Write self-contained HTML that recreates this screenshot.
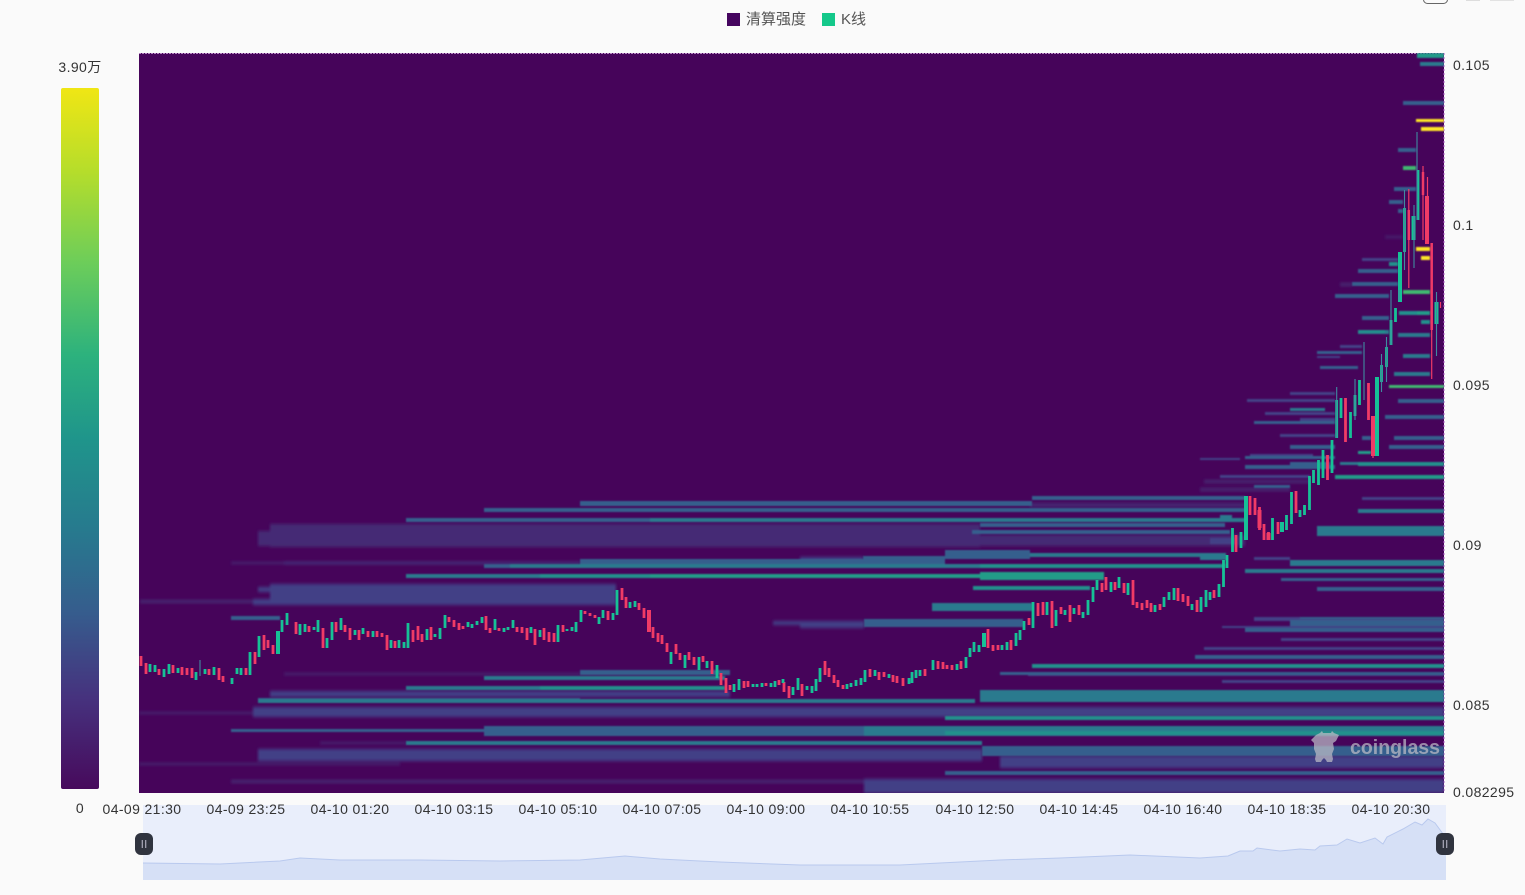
<!DOCTYPE html>
<html><head><meta charset="utf-8"><style>
html,body{margin:0;padding:0;background:#fafafa;width:1525px;height:895px;overflow:hidden}
svg{display:block;font-family:"Liberation Sans","Noto Sans CJK SC",sans-serif}
.c1{fill:#452a74}.c2{fill:#424086}.c3{fill:#365f8d}.c4{fill:#2b7a8e}.c5{fill:#24908c}.c6{fill:#229c88}.c7{fill:#3fb870}.y{fill:#fde725}
.t{font-size:14px;fill:#333;letter-spacing:.38px}
</style></head><body>
<svg width="1525" height="895" viewBox="0 0 1525 895" xmlns="http://www.w3.org/2000/svg">
<defs>
<linearGradient id="vb" x1="0" y1="0" x2="0" y2="1">
<stop offset="0" stop-color="#f0e614"/><stop offset=".12" stop-color="#b5dd2b"/><stop offset=".25" stop-color="#6ccd5a"/><stop offset=".38" stop-color="#2db27d"/><stop offset=".5" stop-color="#1f958b"/><stop offset=".63" stop-color="#277a8e"/><stop offset=".75" stop-color="#365c8d"/><stop offset=".87" stop-color="#46327e"/><stop offset="1" stop-color="#470a5c"/>
</linearGradient>
<filter id="bl" x="-1%" y="-1%" width="102%" height="102%"><feGaussianBlur stdDeviation="0.9 0.8"/></filter>
<filter id="bd" x="-1%" y="-2%" width="102%" height="104%"><feGaussianBlur stdDeviation="1.2 1.7"/></filter>
<filter id="cb" x="-1%" y="-1%" width="102%" height="102%"><feGaussianBlur stdDeviation="0.35"/></filter>
<clipPath id="pc"><rect x="139" y="53" width="1305" height="740"/></clipPath>
</defs>

<!-- top-right clipped control -->
<rect x="1423.5" y="-6" width="24" height="9.5" rx="4" fill="none" stroke="#666" stroke-width="1"/>
<rect x="1466" y="0" width="14" height="1" fill="#ddd"/><rect x="1490" y="0" width="24" height="1" fill="#e2e2e2"/>

<!-- legend -->
<rect x="727" y="13" width="13" height="13" fill="#45055f"/>
<text x="746" y="24" font-size="15" fill="#555">清算强度</text>
<rect x="822" y="13" width="13" height="13" fill="#14c88a"/>
<text x="841" y="24" font-size="15" fill="#555">K线</text>

<!-- colour bar -->
<rect x="61" y="88" width="38" height="701" rx="2" fill="url(#vb)"/>
<text x="80" y="72" text-anchor="middle" class="t">3.90万</text>
<text x="80" y="813" text-anchor="middle" class="t">0</text>

<!-- heatmap -->
<rect x="139" y="53" width="1305" height="740" fill="#46045a"/>
<line x1="139" y1="53.5" x2="1444" y2="53.5" stroke="#b98ac4" stroke-width="1" stroke-dasharray="2 1"/>
<line x1="1444" y1="53" x2="1444" y2="793" stroke="#b060c8" stroke-width="1" stroke-dasharray="2 2"/>
<g clip-path="url(#pc)"><g filter="url(#bd)">
<path class="c1" d="M270 524H980V547H270zM258 531H270V546H258zM980 535H1245V546H980zM1204 480H1310V483H1204zM1030 503H1245V507H1030zM140 600H253V603H140zM1200 488H1290V491H1200zM139 712H253V714H139zM139 763H400V765H139zM231 780H864V783H231zM284 673H580V675H284zM320 692H580V695H320zM320 742H406V744H320zM231 562H284V564H231zM1340 283H1352V286H1340zM1385 236H1403V238H1385z"/>
<path class="c2" d="M284 562H580V564H284zM253 599H616V605H253zM270 584H616V600H270zM258 587H270V592H258zM270 691H730V697H270zM253 707H1444V717H253zM258 749H982V761H258zM864 779H1444V793H864zM1000 756H1444V768H1000zM800 622H864V628H800zM773 621H864V625H773zM800 557H863V564H800z"/>
</g><g filter="url(#bl)">
<path class="c2" d="M1028 672H1444V676H1028zM1254 617H1444V621H1254zM1222 626H1444V628H1222zM1281 638H1444V641H1281zM1204 647H1444V650H1204zM1222 680H1444V683H1222zM1254 557H1290V560H1254zM1362 497H1444V500H1362zM1210 538H1236V544H1210zM1340 345H1362V348H1340zM1362 258H1398V261H1362zM1317 356H1340V358H1317zM1247 399H1335V402H1247zM1290 392H1335V395H1290zM1265 412H1335V415H1265zM1280 434H1335V437H1280zM1300 418H1335V421H1300zM1250 454H1313V457H1250zM1220 475H1310V478H1220zM1200 458H1240V460H1200z"/>
<path class="c3" d="M1032 496H1245V500H1032zM580 501H1032V506H580zM484 508H1245V512H484zM406 518H1245V522H406zM980 523H1225V527H980zM972 530H1230V534H972zM945 550H1030V559H945zM863 556H945V564H863zM580 559H863V564H580zM484 564H980V568H484zM864 619H1023V627H864zM580 670H730V675H580zM1300 617H1444V619H1300zM1290 620H1444V626H1290zM1245 628H1444V632H1245zM1195 655H1444V659H1195zM1281 578H1444V581H1281zM1317 587H1444V591H1317zM231 616H280V620H231zM258 698H580V702H258zM231 729H864V732H231zM484 726H1024V736H484zM406 741H980V745H406zM982 746H1444V756H982zM945 771H1444V775H945zM1000 672H1444V675H1000zM1403 101H1444V105H1403zM1398 148H1416V152H1398zM1394 187H1416V191H1394zM1389 200H1403V204H1389zM1398 209H1403V213H1398zM1358 269H1398V273H1358zM1335 294H1389V298H1335zM1352 282H1398V286H1352zM1362 316H1389V320H1362zM1358 330H1389V333H1358zM1317 351H1340V354H1317zM1340 351H1362V354H1340zM1320 366H1358V369H1320zM1398 399H1444V403H1398zM1385 415H1444V419H1385zM1394 436H1444V440H1394zM1362 436H1371V440H1362zM1389 445H1444V449H1389zM1245 456H1335V459H1245zM1245 465H1335V469H1245zM1290 445H1335V449H1290zM1254 485H1290V488H1254zM1254 421H1335V424H1254zM1290 462H1330V466H1290z"/>
<path class="c4" d="M650 518H1245V522H650zM510 564H980V568H510zM1030 553H1225V557H1030zM406 574H540V578H406zM932 603H1032V611H932zM484 676H725V680H484zM406 686H540V690H406zM258 699H975V703H258zM980 690H1444V702H980zM864 726H1444V736H864zM406 741H982V745H406zM1290 560H1444V566H1290zM1245 569H1444V573H1245zM1420 62H1444V66H1420zM1398 333H1430V337H1398zM1358 330H1389V334H1358zM1403 354H1430V358H1403zM1394 372H1430V376H1394zM1358 451H1371V454H1358zM1358 509H1444V513H1358zM1317 526H1444V536H1317zM1340 462H1358V465H1340zM1290 408H1325V411H1290zM1220 515H1232V522H1220zM1200 553H1226V560H1200z"/>
<path class="c5" d="M980 564H1225V568H980zM540 574H980V578H540zM540 686H725V690H540zM973 586H1090V590H973zM1032 664H1444V668H1032zM945 716H1444V720H945zM945 731H1444V735H945zM1358 462H1444V466H1358zM1335 475H1444V479H1335zM1417 53H1444V58H1417zM1389 262H1398V266H1389zM1399 311H1430V315H1399zM1358 330H1385V333H1358zM1421 320H1430V324H1421z"/>
<path class="c6" d="M650 574H1104V578H650zM980 572H1104V580H980zM1417 311H1430V315H1417zM1335 475H1444V479H1335zM1417 54H1444V57H1417zM1358 451H1371V454H1358z"/>
<path class="c7" d="M1403 166H1416V170H1403zM1403 290H1430V294H1403zM1389 385H1444V388H1389z"/>
<path class="y" d="M1416 119H1444V122H1416zM1421 127H1444V131H1421zM1416 247H1430V251H1416zM1421 256H1430V260H1421z"/>
</g>

<!-- candles -->
<g fill="none" stroke-linecap="butt" filter="url(#cb)">
<path stroke="#ef3a66" stroke-width="2.8" d="M141 656V666M146 663V674M159 669V675M173 665V673M182 667V675M187 668V675M192 668V678M209 669V675M219 668V680M223 676V682M246 668V675M255 652V664M264 635V650M268 640V648M273 645V654M296 622V634M309 626V632M323 628V648M336 622V632M345 625V632M350 628V640M359 630V640M368 631V637M377 631V637M382 633V637M387 635V650M395 641V648M413 630V642M418 626V640M422 634V642M431 627V640M449 617V622M454 620V627M459 623V630M463 626V629M486 616V630M490 628V633M499 628V631M517 627V632M522 627V633M527 628V640M535 629V645M544 628V640M549 632V642M554 633V642M563 625V632M585 611V614M590 613V616M595 615V618M608 611V620M622 588V600M626 597V608M639 603V610M644 608V618M653 627V638M658 633V642M662 635V644M667 643V652M676 644V654M680 653V660M689 652V660M694 657V665M703 656V662M712 661V674M721 673V685M726 678V693M730 685V690M744 681V688M748 681V687M766 683V686M779 680V685M784 682V692M789 686V698M802 684V696M825 661V675M829 668V677M834 675V683M838 680V687M843 685V689M870 669V677M879 672V680M884 672V677M893 675V682M897 676V683M903 678V686M925 669V676M938 661V669M943 662V669M947 665V669M952 665V670M961 661V669M988 629V648M993 645V651M998 645V650M1011 640V650M1029 618V625M1038 603V616M1043 602V615M1052 601V628M1061 607V614M1070 605V622M1079 605V615M1102 583V592M1106 577V590M1115 582V590M1124 583V593M1133 580V605M1137 602V608M1142 603V610M1147 600V608M1151 603V612M1160 604V610M1178 588V601M1183 594V602M1188 596V606M1197 600V612M1214 590V598M1236 535V552M1250 496V515M1255 498V515M1259.5 507V530M1264 524V540M1268.5 532V540M1278 522V534M1296 491V513M1327.5 455V480M1345.5 398V442M1368.5 383V420"/>
<path stroke="#ef3a66" stroke-width="4" d="M649 610V632M1268.5 533V540M1259.5 510V528M1373 416V456M1427 196V244"/>
<path stroke="#ef3a66" stroke-width="2.5" d="M1408.8 210V240M1423 172V195M1431.7 243V330"/>
<path stroke="#ef3a66" stroke-width="1.2" d="M1423 166V240M1427.5 177V243M1431.7 243V379M1408.8 189V288M1373 416V458M1440.5 302V308"/>
<path stroke="#17c196" stroke-width="2.8" d="M150 664V672M155 665V672M164 669V677M169 664V674M178 668V673M196 672V680M205 669V674M214 667V675M232 678V684M237 668V674M241 668V675M250 652V675M259 636V657M282 620V632M287 613V625M300 624V635M305 624V632M314 627V630M318 620V632M327 638V648M332 622V640M341 618V630M355 630V635M363 628V634M373 631V637M391 640V648M399 640V648M404 642V648M408 623V648M427 629V640M435 634V637M440 628V639M445 615V628M468 622V627M472 624V628M477 621V625M482 617V623M495 619V630M504 628V632M508 627V630M513 620V628M531 627V633M540 630V637M558 625V642M567 629V631M572 627V631M576 622V632M581 610V622M599 617V624M603 610V618M613 613V620M617 590V615M630 602V608M635 601V607M671 652V664M685 655V668M699 657V670M707 661V668M717 665V678M734 684V692M739 679V690M753 684V687M757 684V687M762 683V687M771 683V687M775 681V687M783 679V683M793 687V695M798 678V690M807 686V690M812 686V693M816 679V691M820 668V682M847 684V689M851 683V687M856 680V686M861 678V685M865 670V682M875 670V676M889 674V678M909 678V684M912 672V683M916 670V678M920 670V676M933 660V670M957 664V670M966 657V668M970 648V657M974 642V652M979 645V652M1002 645V650M1007 642V650M1016 633V646M1020 630V640M1024 621V630M1033 602V628M1047 602V615M1056 610V626M1065 610V615M1074 608V614M1083 612V618M1088 600V615M1093 587V602M1097 580V590M1111 582V592M1119 577V588M1128 583V595M1155 605V612M1164 597V607M1169 592V600M1174 588V600M1192 604V610M1201 597V612M1206 590V607M1210 592V600M1219 584V597M1223.5 560V587M1227 555V568M1232.5 528V552M1241 532V548M1272.5 518V540M1282 522V532M1286.5 515V530M1291.5 492V524M1300 510V517M1304.5 505V515M1309.5 476V510M1313.5 470V483M1318.5 460V485M1323 450V478M1332 440V473M1336.7 400V438M1341 398V418M1350.5 412V438M1355 395V416M1359.5 380V405M1381.5 365V382M1386.5 347V367M1391 320V345M1395.5 308V322M1404.5 208V252M1418 170V220"/>
<path stroke="#17c196" stroke-width="4" d="M278 631V654M984 633V647M1246 496V540M1377 377V456M1400 252V302M1413.5 216V240M1436.5 302V324M1282 522V532"/>
<path stroke="#3f8aa0" stroke-width="1.1" d="M200 660V676M1417 132V220M1414 205V268M1436.5 292V356M1404.5 190V270M1391 290V345M1386.5 337V382M1381.5 354V392M1364 342V400M1355 379V420M1336.7 387V438M1399 290V300"/>
</g>

<!-- watermark -->
<g fill="#bdbcc6" opacity=".72">
<path d="M1316 735l4-2 2-2 1 2h8l1-2 2 2 5 2-3 6-3 2 1 6-2 5 1 5-1 3h-5l-1-2-2-2-2 2-1 2h-5l-1-3 1-5-2-5v-6l-3-3z"/>
<text x="1350" y="754" font-size="20.5" font-weight="700" textLength="90" lengthAdjust="spacingAndGlyphs">coinglass</text>
</g>
</g>

<!-- y axis -->
<text x="1453" y="70" class="t">0.105</text>
<text x="1453" y="230" class="t">0.1</text>
<text x="1453" y="390" class="t">0.095</text>
<text x="1453" y="550" class="t">0.09</text>
<text x="1453" y="710" class="t">0.085</text>
<text x="1453" y="797" class="t">0.082295</text>

<!-- slider -->
<rect x="143" y="805" width="1303" height="75" fill="#e9eefb"/>
<path d="M143 863L220 864L280 861L300 858L340 860L420 860L500 861L580 860L625 856L660 859L720 862L800 865L900 865L1000 860L1060 858L1130 855L1200 858L1228 856L1240 851L1253 851L1257 848L1280 851L1300 849L1315 850L1320 846L1337 845L1347 839L1360 843L1375 838L1383 844L1387 837L1403 829L1415 822L1422 825L1428 819L1435 823L1446 838V880H143Z" fill="#d6e0f6" stroke="none"/>
<path d="M143 863L220 864L280 861L300 858L340 860L420 860L500 861L580 860L625 856L660 859L720 862L800 865L900 865L1000 860L1060 858L1130 855L1200 858L1228 856L1240 851L1253 851L1257 848L1280 851L1300 849L1315 850L1320 846L1337 845L1347 839L1360 843L1375 838L1383 844L1387 837L1403 829L1415 822L1422 825L1428 819L1435 823L1446 838" fill="none" stroke="#b9c9ee" stroke-width="1"/>
<rect x="135" y="833" width="18" height="22" rx="6" fill="#30343f"/><path d="M142.3 840v8M145.7 840v8" stroke="#aab" stroke-width="1.2"/>
<rect x="1436" y="833" width="18" height="22" rx="6" fill="#30343f"/><path d="M1443.3 840v8M1446.7 840v8" stroke="#aab" stroke-width="1.2"/>

<!-- x axis -->
<g text-anchor="middle">
<text x="142" y="814" class="t">04-09 21:30</text>
<text x="246" y="814" class="t">04-09 23:25</text>
<text x="350" y="814" class="t">04-10 01:20</text>
<text x="454" y="814" class="t">04-10 03:15</text>
<text x="558" y="814" class="t">04-10 05:10</text>
<text x="662" y="814" class="t">04-10 07:05</text>
<text x="766" y="814" class="t">04-10 09:00</text>
<text x="870" y="814" class="t">04-10 10:55</text>
<text x="975" y="814" class="t">04-10 12:50</text>
<text x="1079" y="814" class="t">04-10 14:45</text>
<text x="1183" y="814" class="t">04-10 16:40</text>
<text x="1287" y="814" class="t">04-10 18:35</text>
<text x="1391" y="814" class="t">04-10 20:30</text>
</g>
</svg>
</body></html>
